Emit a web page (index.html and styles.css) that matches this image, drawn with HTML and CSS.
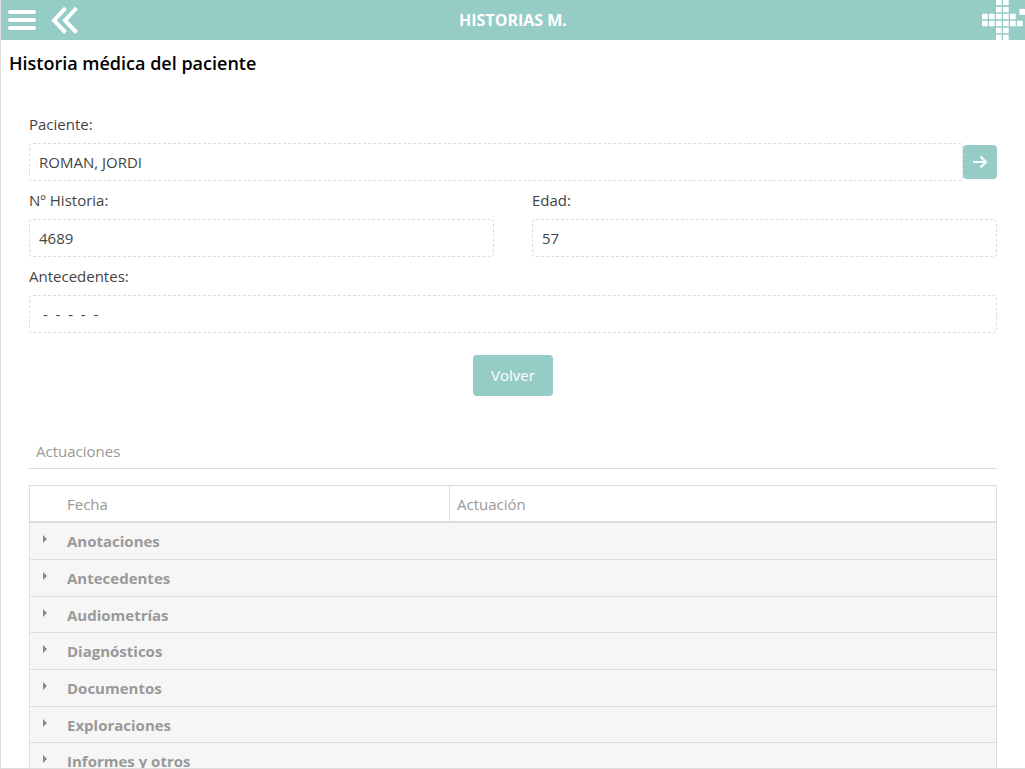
FILE: index.html
```html
<!DOCTYPE html>
<html lang="es">
<head>
<meta charset="utf-8">
<title>Historias M.</title>
<link rel="stylesheet" href="styles.css">
</head>
<body>
<div class="window">
  <header class="topbar">
    <div class="topbar-nav">
      <button class="icon-button" type="button" aria-label="Menú">
        <svg width="28" height="20" viewBox="0 0 28 20" stroke="#fff" stroke-width="4" stroke-linecap="round"><path d="M2 2h24M2 10h24M2 18h24"/></svg>
      </button>
      <button class="icon-button" type="button" aria-label="Atrás">
        <svg width="28" height="28" viewBox="0 0 28 28" fill="none" stroke="#fff" stroke-width="4"><path d="M14.500 2 3 14.500l11.500 12M25.500 2 14 14.500l11.500 12"/></svg>
      </button>
    </div>
    <h1 class="topbar-title">HISTORIAS M.</h1>
    <svg class="logo" width="43" height="40" viewBox="0 0 43 40" fill="none" stroke="#fff" stroke-width="5.700">
      <path stroke-dasharray="5.700 1.300" d="M14 2.200h13M14 9.500h13M0 16.500h34M0 23.500h41M14 30.500h13M14 37.500h13M37.500 11.800h6"/>
    </svg>
  </header>
  <main class="content">
    <h2 class="page-title">Historia médica del paciente</h2>
    <form class="form">
      <div class="field">
        <label for="paciente">Paciente:</label>
        <div class="input-group">
          <input class="input" id="paciente" type="text" value="ROMAN, JORDI" readonly>
          <button class="go-button" type="button" aria-label="Ir al paciente">
            <svg width="16" height="14" viewBox="0 0 16 14" fill="none" stroke="#fff" stroke-width="2"><path d="M1 7h13M8.500 1.500 14 7l-5.500 5.500"/></svg>
          </button>
        </div>
      </div>
      <div class="field-row">
        <div class="field">
          <label for="historia">Nº Historia:</label>
          <input class="input" id="historia" type="text" value="4689" readonly>
        </div>
        <div class="field">
          <label for="edad">Edad:</label>
          <input class="input" id="edad" type="text" value="57" readonly>
        </div>
      </div>
      <div class="field">
        <label for="antecedentes">Antecedentes:</label>
        <input class="input" id="antecedentes" type="text" value=" -  -  -  -  -" readonly>
      </div>
      <button class="primary-button" type="button">Volver</button>
    </form>
    <section class="records">
      <h3 class="records-title">Actuaciones</h3>
      <table class="grid">
        <colgroup><col class="col-date"><col></colgroup>
        <thead>
          <tr><th class="date-head" scope="col">Fecha</th><th scope="col">Actuación</th></tr>
        </thead>
        <tbody>
          <tr><td colspan="2"><button class="group" type="button"><span class="caret"></span>Anotaciones</button></td></tr>
          <tr><td colspan="2"><button class="group" type="button"><span class="caret"></span>Antecedentes</button></td></tr>
          <tr><td colspan="2"><button class="group" type="button"><span class="caret"></span>Audiometrías</button></td></tr>
          <tr><td colspan="2"><button class="group" type="button"><span class="caret"></span>Diagnósticos</button></td></tr>
          <tr><td colspan="2"><button class="group" type="button"><span class="caret"></span>Documentos</button></td></tr>
          <tr><td colspan="2"><button class="group" type="button"><span class="caret"></span>Exploraciones</button></td></tr>
          <tr><td colspan="2"><button class="group" type="button"><span class="caret"></span>Informes y otros</button></td></tr>
        </tbody>
      </table>
    </section>
  </main>
</div>
</body>
</html>
```
FILE: styles.css
```css
* {
  box-sizing: border-box;
}

body {
  margin: 0;
  background: #fff;
  color: #444;
  font: 15px/24px "Segoe UI", "Open Sans", "Noto Sans", sans-serif;
}

button,
input {
  font: inherit;
}

.window {
  display: flex;
  flex-direction: column;
  height: 100vh;
  overflow: hidden;
  border-left: 1px solid #ddd;
  border-bottom: 1px solid #ddd;
}

.topbar {
  display: grid;
  grid-template-columns: 1fr auto 1fr;
  align-items: center;
  flex: none;
  height: 40px;
  background: #95cdc6;
}

.topbar-nav {
  display: flex;
  align-items: center;
  gap: 15px;
  padding-left: 7px;
}

.icon-button {
  display: flex;
  padding: 0;
  border: 0;
  background: none;
}

.topbar-title {
  margin: 0;
  color: #fff;
  font-size: 16px;
  font-weight: 700;
}

.logo {
  justify-self: end;
}

.content {
  flex: 1;
  min-height: 0;
  overflow: hidden;
}

.page-title {
  margin: 0;
  padding: 11px 8px 0;
  color: #000;
  font-size: 18px;
  font-weight: 600;
}

.form {
  display: flex;
  flex-direction: column;
  gap: 8px;
  padding: 38px 28px 0;
}

.field {
  display: flex;
  flex-direction: column;
  gap: 8px;
}

.field label {
  line-height: 22px;
}

.field-row {
  display: grid;
  grid-template-columns: 1fr 1fr;
  gap: 38px;
}

.input-group {
  display: flex;
  align-items: center;
}

.input {
  flex: auto;
  min-width: 0;
  height: 38px;
  padding: 0 9px;
  border: 1px dashed #ddd;
  border-radius: 4px;
  background: #fff;
  color: #444;
}

.go-button {
  display: flex;
  align-items: center;
  justify-content: center;
  width: 34px;
  height: 34px;
  padding: 0;
  border: 0;
  border-radius: 4px;
  background: #95cdc6;
}

.primary-button {
  align-self: center;
  width: 80px;
  height: 41px;
  margin-top: 14px;
  padding: 0 0 2px;
  border: 0;
  border-radius: 4px;
  background: #95cdc6;
  color: #fff;
}

.records {
  padding: 40px 28px 0;
}

.records-title {
  margin: 0 0 16px;
  padding: 3px 7px 5px;
  border-bottom: 1px solid #ddd;
  color: #999;
  font-size: 15px;
  font-weight: 400;
}

.grid {
  width: 100%;
  table-layout: fixed;
  border: 1px solid #ddd;
  border-spacing: 0;
  color: #999;
}

.col-date {
  width: 420px;
}

.grid th {
  height: 37px;
  padding: 0 7px;
  border-bottom: 2px solid #ddd;
  font-weight: 400;
  text-align: left;
}

.grid .date-head {
  padding-left: 37px;
  border-right: 1px solid #ddd;
}

.grid td {
  height: 37px;
  padding: 0;
  border-bottom: 1px solid #ddd;
  background: #f6f6f6;
}

.grid tr:nth-child(3n) td {
  height: 36px;
}

.group {
  display: flex;
  align-items: center;
  width: 100%;
  padding: 0 13px;
  border: 0;
  background: none;
  color: #999;
  font-weight: 700;
  text-align: left;
}

.caret {
  width: 4px;
  margin: 0 20px 4px 0;
  border: solid transparent;
  border-width: 4px 0 4px 4px;
  border-left-color: #888;
}
```
